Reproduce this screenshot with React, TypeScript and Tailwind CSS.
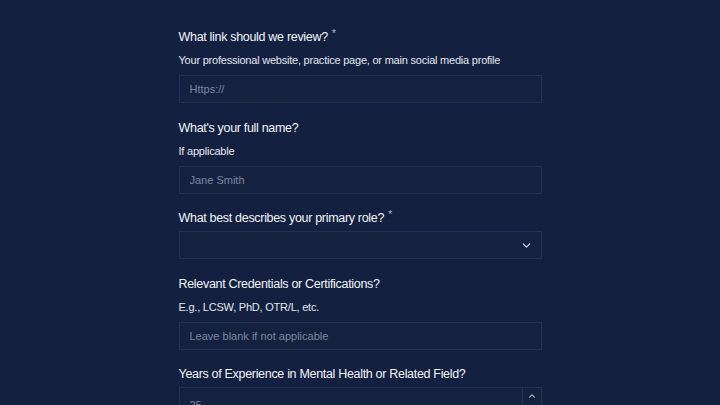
import { ChevronDown, ChevronUp } from "lucide-react";

const font = { fontFamily: '"Liberation Sans", Arial, sans-serif' };

const Label = ({ text, required }: { text: string; required?: boolean }) => (
  <label className="block text-[12.5px] leading-[16px] tracking-[-0.025em] text-[#f1f4f8]">
    {text}
    {required && <span className="relative -top-[4px] ml-[4px] text-[11px] text-[#aab2c3]">*</span>}
  </label>
);

const Hint = ({ text }: { text: string }) => (
  <p className="text-[11px] leading-[20px] tracking-[-0.02em] text-[#e3e7ee]">{text}</p>
);

const inputCls =
  "h-[28px] w-full border border-[#24314f] bg-[#142240] px-[10px] text-[11px] text-[#dfe4ec] placeholder:text-[#7c879f] outline-none";

export default function App() {
  return (
    <div className="min-h-screen bg-[#13203f]" style={font}>
      <form className="mx-auto flex w-[363px] flex-col gap-[16.5px] pt-[29px]">
        <div className="flex flex-col gap-[5px]">
          <Label text="What link should we review?" required />
          <Hint text="Your professional website, practice page, or main social media profile" />
          <input className={inputCls} placeholder="Https://" />
        </div>

        <div className="flex flex-col gap-[5px]">
          <Label text="What's your full name?" />
          <Hint text="If applicable" />
          <input className={inputCls} placeholder="Jane Smith" />
        </div>

        <div className="flex flex-col gap-[5px]">
          <Label text="What best describes your primary role?" required />
          <div className="flex h-[28px] w-full items-center justify-end border border-[#24314f] bg-[#142240] pr-[8px]">
            <ChevronDown size={13} strokeWidth={2} className="text-[#d3d9e3]" />
          </div>
        </div>

        <div className="flex flex-col gap-[5px]">
          <Label text="Relevant Credentials or Certifications?" />
          <Hint text="E.g., LCSW, PhD, OTR/L, etc." />
          <input className={inputCls} placeholder="Leave blank if not applicable" />
        </div>

        <div className="flex flex-col gap-[5px]">
          <Label text="Years of Experience in Mental Health or Related Field?" />
          <div className="flex h-[32px] w-full border border-[#24314f] bg-[#142240]">
            <input className="h-full flex-1 bg-transparent px-[10px] pt-[4px] text-[11px] text-[#dfe4ec] placeholder:text-[#7c879f] outline-none" placeholder="25" />
            <div className="flex w-[19px] flex-col border-l border-[#24314f]">
              <div className="flex flex-1 items-center justify-center">
                <ChevronUp size={10} strokeWidth={2.5} className="text-[#d3d9e3]" />
              </div>
              <div className="flex flex-1 items-center justify-center">
                <ChevronDown size={10} strokeWidth={2.5} className="text-[#d3d9e3]" />
              </div>
            </div>
          </div>
        </div>
      </form>
    </div>
  );
}
